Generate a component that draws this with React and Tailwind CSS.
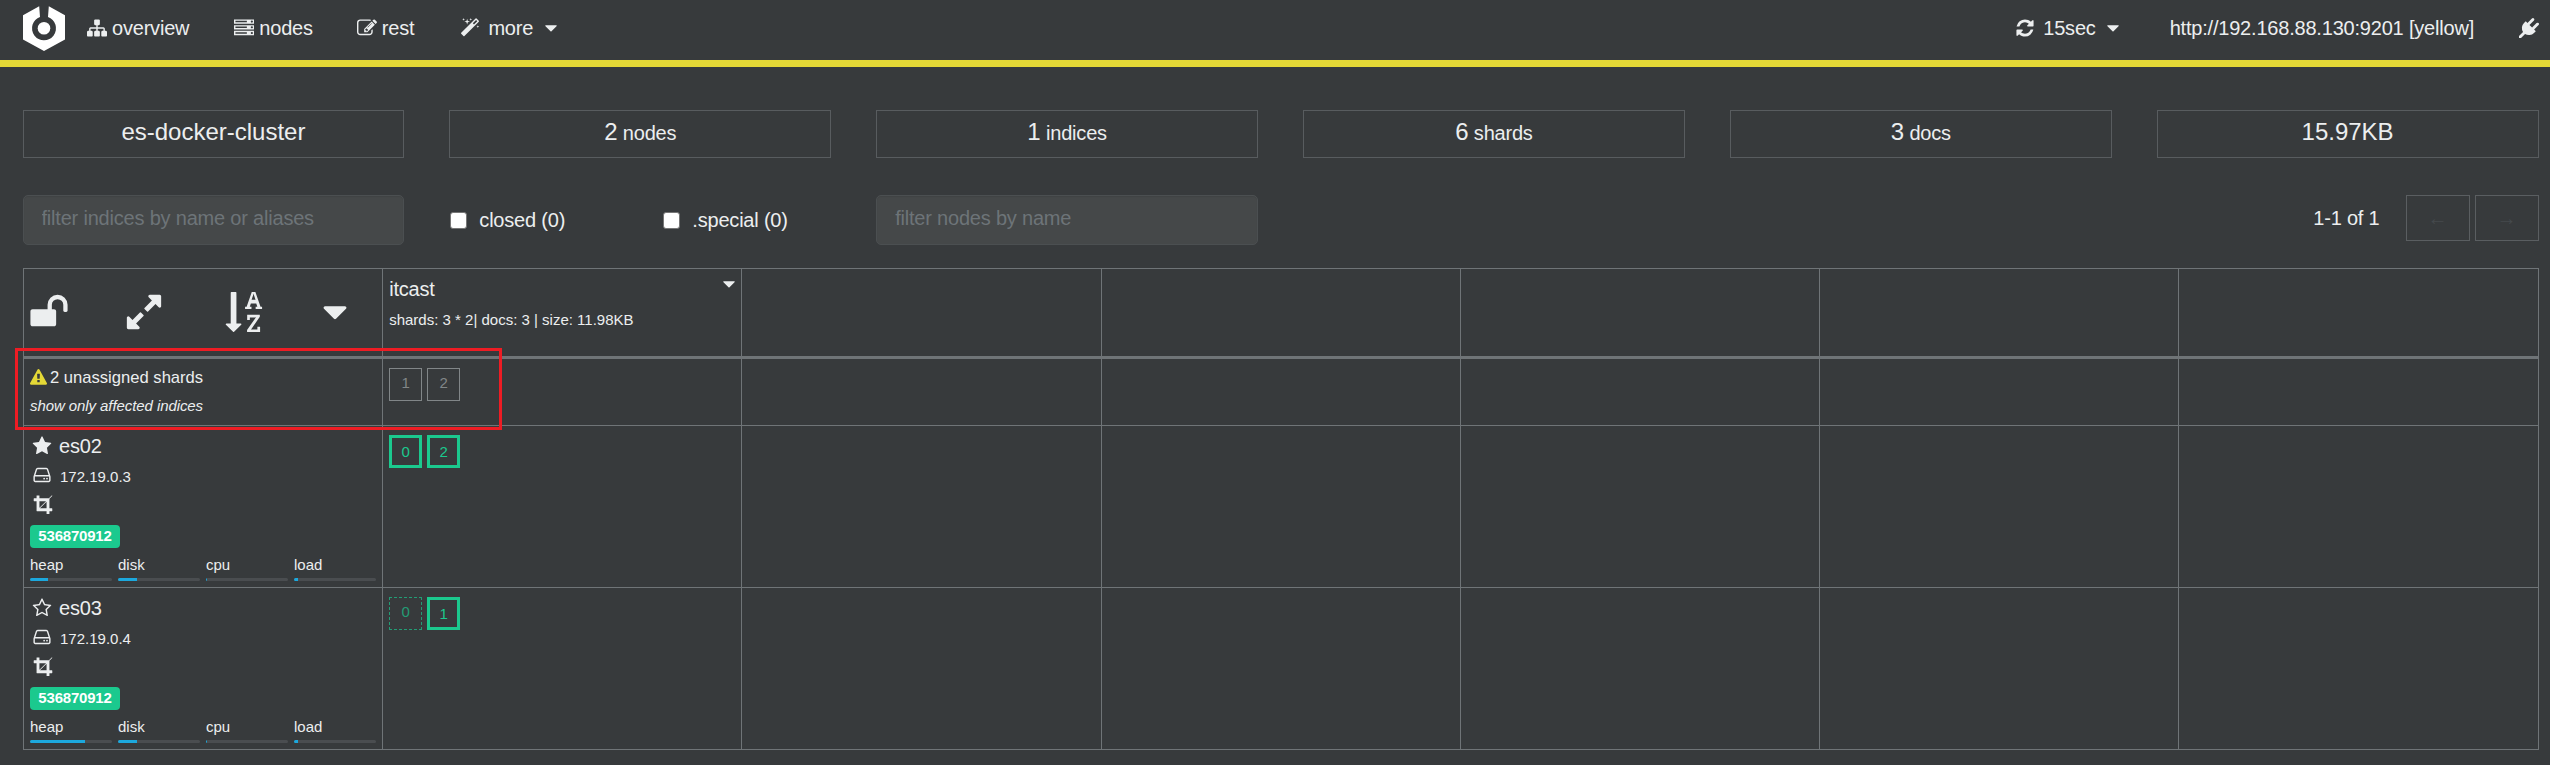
import React from "react";

const ICONS = {
  sitemap:
    "M1792 1248v320q0 40-28 68t-68 28h-320q-40 0-68-28t-28-68v-320q0-40 28-68t68-28h96v-192h-512v192h96q40 0 68 28t28 68v320q0 40-28 68t-68 28h-320q-40 0-68-28t-28-68v-320q0-40 28-68t68-28h96v-192h-512v192h96q40 0 68 28t28 68v320q0 40-28 68t-68 28h-320q-40 0-68-28t-28-68v-320q0-40 28-68t68-28h96v-192q0-52 38-90t90-38h512v-192h-96q-40 0-68-28t-28-68v-320q0-40 28-68t68-28h320q40 0 68 28t28 68v320q0 40-28 68t-68 28h-96v192h512q52 0 90 38t38 90v192h96q40 0 68 28t28 68z",
  server:
    "M128 1408h1024v-128h-1024v128zm0-512h1024v-128h-1024v128zm1568 448q0-40-28-68t-68-28-68 28-28 68 28 68 68 28 68-28 28-68zm-1568-960h1024v-128h-1024v128zm1568 448q0-40-28-68t-68-28-68 28-28 68 28 68 68 28 68-28 28-68zm0-512q0-40-28-68t-68-28-68 28-28 68 28 68 68 28 68-28 28-68zm96 832v384h-1792v-384h1792zm0-512v384h-1792v-384h1792zm0-512v384h-1792v-384h1792z",
  edit:
    "M888 1184l116-116-152-152-116 116v56h96v96h56zm440-720q-16-16-33 1l-350 350q-17 17-1 33t33-1l350-350q17-17 1-33zm80 594v190q0 119-84.5 203.5t-203.5 84.5h-832q-119 0-203.5-84.5t-84.5-203.5v-832q0-119 84.5-203.5t203.5-84.5h832q63 0 117 25 15 7 18 23 3 17-9 29l-49 49q-14 14-32 8-23-6-45-6h-832q-66 0-113 47t-47 113v832q0 66 47 113t113 47h832q66 0 113-47t47-113v-126q0-13 9-22l64-64q15-15 35-7t20 29zm-96-738l288 288-672 672h-288v-288zm444 132l-92 92-288-288 92-92q28-28 68-28t68 28l152 152q28 28 28 68t-28 68z",
  magic:
    "M1254 581l293-293-107-107-293 293zm447-293q0 27-18 45l-1286 1286q-18 18-45 18t-45-18l-198-198q-18-18-18-45t18-45l1286-1286q18-18 45-18t45 18l198 198q18 18 18 45zm-1351-190l98 30-98 30-30 98-30-98-98-30 98-30 30-98zm350 162l196 60-196 60-60 196-60-196-196-60 196-60 60-196zm930 478l98 30-98 30-30 98-30-98-98-30 98-30 30-98zm-640-640l98 30-98 30-30 98-30-98-98-30 98-30 30-98z",
  refresh:
    "M1639 1056q0 5-1 7-64 268-268 434.5t-478 166.5q-146 0-282.5-55t-243.5-157l-129 129q-19 19-45 19t-45-19-19-45v-448q0-26 19-45t45-19h448q26 0 45 19t19 45-19 45l-137 137q71 66 161 102t187 36q134 0 250-65t186-179q11-17 53-117 8-23 30-23h192q13 0 22.5 9.5t9.5 22.5zm25-800v448q0 26-19 45t-45 19h-448q-26 0-45-19t-19-45 19-45l138-138q-148-137-349-137-134 0-250 65t-186 179q-11 17-53 117-8 23-30 23h-199q-13 0-22.5-9.5t-9.5-22.5v-7q65-268 270-434.5t480-166.5q146 0 284 55.5t245 156.5l130-129q19-19 45-19t45 19 19 45z",
  plug:
    "M1755 453q37 38 37 90.5t-37 90.5l-401 400 150 150-160 160q-163 163-389.5 186.5t-411.5-100.5l-362 362h-181v-181l362-362q-124-185-100.5-411.5t186.5-389.5l160-160 150 150 400-401q38-37 91-37t90 37 37 90.5-37 90.5l-400 401 234 234 401-400q38-37 91-37t90 37z",
  unlock:
    "M1728 576v256q0 26-19 45t-45 19h-64q-26 0-45-19t-19-45v-256q0-106-75-181t-181-75-181 75-75 181v192h96q40 0 68 28t28 68v576q0 40-28 68t-68 28h-960q-40 0-68-28t-28-68v-576q0-40 28-68t68-28h672v-192q0-185 131.5-316.5t316.5-131.5 316.5 131.5 131.5 316.5z",
  expand:
    "M883 1056q0 13-10 23l-332 332 144 144q19 19 19 45t-19 45-45 19h-448q-26 0-45-19t-19-45v-448q0-26 19-45t45-19 45 19l144 144 332-332q10-10 23-10t23 10l114 114q10 10 10 23zm781-864v448q0 26-19 45t-45 19-45-19l-144-144-332 332q-10 10-23 10t-23-10l-114-114q-10-10-10-23t10-23l332-332-144-144q-19-19-19-45t19-45 45-19h448q26 0 45 19t19 45z",
  sortAlpha:
    "M1191 352h177l-72-218-12-47q-2-16-2-20h-4l-3 20q0 1-3.5 18t-7.5 29zm-455 1088q0 12-10 24l-319 319q-10 9-23 9-12 0-23-9l-320-320q-15-16-7-35 8-20 30-20h192v-1376q0-14 9-23t23-9h192q14 0 23 9t9 23v1376h192q14 0 23 9t9 23zm836 119v233h-584v-90l369-529q12-18 21-27l11-9v-3q-2 0-6.5.5t-7.5.5q-12 3-30 3h-232v115h-120v-229h567v89l-369 530q-6 8-21 26l-11 11v2l14-2q9-2 30-2h248v-119h121zm89-898v106h-288v-106h75l-47-144h-243l-47 144h75v106h-287v-106h70l230-662h162l230 662h70z",
  caret:
    "M1408 704q0 26-19 45l-448 448q-19 19-45 19t-45-19l-448-448q-19-19-19-45t19-45 45-19h896q26 0 45 19t19 45z",
  warning:
    "M1024 1375v-190q0-14-9.5-23.5t-22.5-9.5h-192q-13 0-22.5 9.5t-9.5 23.5v190q0 14 9.5 23.5t22.5 9.5h192q13 0 22.5-9.5t9.5-23.5zm-2-374l18-459q0-12-10-19-13-11-24-11h-220q-11 0-24 11-10 7-10 21l17 457q0 10 10 16.5t24 6.5h185q14 0 23.5-6.5t10.5-16.5zm-14-934l768 1408q35 63-2 126-17 29-46.5 46t-63.5 17h-1536q-34 0-63.5-17t-46.5-46q-37-63-2-126l768-1408q17-31 47-49t65-18 65 18 47 49z",
  star:
    "M1728 647q0 22-26 48l-363 354 86 500q1 7 1 20 0 21-10.5 35.5t-30.5 14.5q-19 0-40-12l-449-236-449 236q-22 12-40 12-21 0-31.5-14.5t-10.5-35.5q0-6 2-20l86-500-364-354q-25-27-25-48 0-37 56-46l502-73 225-455q19-41 49-41t49 41l225 455 502 73q56 9 56 46z",
  starOutline:
    "M1201 1004l306-297-422-62-189-382-189 382-422 62 306 297-73 421 378-199 377 199zm527-357q0 22-26 48l-363 354 86 500q1 7 1 20 0 50-41 50-19 0-40-12l-449-236-449 236q-22 12-40 12-21 0-31.5-14.5t-10.5-35.5q0-6 2-20l86-500-364-354q-25-27-25-48 0-37 56-46l502-73 225-455q19-41 49-41t49 41l225 455 502 73q56 9 56 46z",
  hdd:
    "M1168 1216q0 33-23.5 56.5t-56.5 23.5-56.5-23.5-23.5-56.5 23.5-56.5 56.5-23.5 56.5 23.5 23.5 56.5zm256 0q0 33-23.5 56.5t-56.5 23.5-56.5-23.5-23.5-56.5 23.5-56.5 56.5-23.5 56.5 23.5 23.5 56.5zm112 160v-320q0-13-9.5-22.5t-22.5-9.5h-1216q-13 0-22.5 9.5t-9.5 22.5v320q0 13 9.5 22.5t22.5 9.5h1216q13 0 22.5-9.5t9.5-22.5zm-1230-480h1180l-157-482q-4-13-16-21.5t-26-8.5h-782q-14 0-26 8.5t-16 21.5zm1358 160v320q0 66-47 113t-113 47h-1216q-66 0-113-47t-47-113v-320q0-25 16-75l197-606q17-53 63-86t101-33h782q55 0 101 33t63 86l197 606q16 50 16 75z",
  crop:
    "M621 1280h595v-595zm-45-45l595-595h-595v595zm1152 77v192q0 14-9 23t-23 9h-224v224q0 14-9 23t-23 9h-192q-14 0-23-9t-9-23v-224h-864q-14 0-23-9t-9-23v-864h-224q-14 0-23-9t-9-23v-192q0-14 9-23t23-9h224v-224q0-14 9-23t23-9h192q14 0 23 9t9 23v224h851l246-247q10-9 23-9t23 9q9 10 9 23t-9 23l-247 246v851h224q14 0 23 9t9 23z",
};

function Icon({ name, className = "size-5" }) {
  return (
    <svg viewBox="0 0 1792 1792" fill="currentColor" className={`shrink-0 ${className}`} aria-hidden="true">
      <path d={ICONS[name]} />
    </svg>
  );
}

function Logo() {
  return (
    <svg viewBox="0 0 42 45" className="h-[45px] w-[42px] shrink-0" aria-hidden="true">
      <path
        fill="#fff"
        d="M16.2 0.2 L17 11 A12 12 0 1 0 25 11 L25.8 0.2 L42 9.2 V33.5 L21 45 L0 33.5 V9.2 Z"
      />
      <circle cx="21" cy="22.3" r="6.3" fill="#fff" />
    </svg>
  );
}

function Navbar() {
  return (
    <nav className="flex h-[67px] items-center border-b-[7px] border-[#e4d836] pb-1 pl-[23px] pr-[11px] text-xl tracking-[-0.2px]">
      <div className="mt-[1px]">
        <Logo />
      </div>
      <a className="ml-[22px] flex items-center gap-[5px]">
        <Icon name="sitemap" />
        overview
      </a>
      <a className="ml-[45px] flex items-center gap-[5px]">
        <Icon name="server" />
        nodes
      </a>
      <a className="ml-[44px] flex items-center gap-[5px]">
        <Icon name="edit" />
        rest
      </a>
      <a className="ml-[46px] flex items-center">
        <Icon name="magic" />
        <span className="ml-[8px]">more</span>
        <Icon name="caret" className="ml-[8px] size-5" />
      </a>
      <a className="ml-auto flex items-center">
        <Icon name="refresh" />
        <span className="ml-[8px]">15sec</span>
        <Icon name="caret" className="ml-[7px] size-5" />
      </a>
      <a className="ml-[47px]">http://192.168.88.130:9201 [yellow]</a>
      <a className="ml-[45px]">
        <Icon name="plug" />
      </a>
    </nav>
  );
}

const STATS = [
  { value: "es-docker-cluster" },
  { value: "2", label: "nodes" },
  { value: "1", label: "indices" },
  { value: "6", label: "shards" },
  { value: "3", label: "docs" },
  { value: "15.97KB" },
];

function Stats() {
  return (
    <div className="mt-[43px] grid grid-cols-6 gap-x-[45px]">
      {STATS.map((s) => (
        <div key={s.value} className="h-12 border border-[#585c5f] text-center text-2xl leading-[42px]">
          {s.value}
          {s.label && <span className="text-xl leading-none tracking-[-0.2px]"> {s.label}</span>}
        </div>
      ))}
    </div>
  );
}

function FilterInput({ placeholder }) {
  return (
    <input
      placeholder={placeholder}
      className="h-[50px] w-full rounded-[5px] border border-[#4b4f51] bg-[#454849] px-[18px] pb-[3px] text-xl tracking-[-0.2px] shadow-[inset_0_1px_1px_rgba(0,0,0,0.075)] outline-none placeholder:text-[#6d7478]"
    />
  );
}

function Check({ label }) {
  return (
    <label className="flex w-[213px] shrink-0 items-center">
      <span className="ml-[1px] size-[17px] rounded-[3px] border border-[#767676] bg-white" />
      <span className="ml-[12px] leading-[26px]">{label}</span>
    </label>
  );
}

function PageButton({ children }) {
  return (
    <button className="h-[46px] w-16 border border-[#5a5e61] text-xl text-[#45494c]">{children}</button>
  );
}

function Filters() {
  return (
    <div className="mt-[37px] grid h-[50px] grid-cols-6 gap-x-[45px] text-xl tracking-[-0.2px]">
      <FilterInput placeholder="filter indices by name or aliases" />
      <div className="flex items-center whitespace-nowrap">
        <Check label="closed (0)" />
        <Check label=".special (0)" />
      </div>
      <FilterInput placeholder="filter nodes by name" />
      <div className="col-span-3 flex h-[46px] items-center justify-end">
        <span className="mr-[26px]">1-1 of 1</span>
        <div className="flex gap-[5px]">
          <PageButton>←</PageButton>
          <PageButton>→</PageButton>
        </div>
      </div>
    </div>
  );
}

const SHARD_STYLES = {
  unassigned: "border border-[#818688] text-[#818688] leading-[27px]",
  primary: "border-[3px] border-[#1bc98e] text-[#1bc98e] leading-[28px]",
  replica: "border border-dashed border-[#239c75] text-[#239c75] leading-[28px]",
};

function Shards({ items, className = "" }) {
  return (
    <div className={`flex gap-[5px] ${className}`}>
      {items.map(([n, kind]) => (
        <div key={n} className={`size-[33px] text-center text-[15px] ${SHARD_STYLES[kind]}`}>
          {n}
        </div>
      ))}
    </div>
  );
}

function Row({ className, children }) {
  const cells = React.Children.toArray(children);
  return (
    <div className={`grid grid-cols-[repeat(6,359.2px)_1fr] border-[#6f7477] ${className}`}>
      {Array.from({ length: 7 }, (_, i) => (
        <div key={i} className="overflow-hidden border-l border-[#6f7477] px-[6px]">
          {cells[i]}
        </div>
      ))}
    </div>
  );
}

function Meter({ label, px }) {
  return (
    <div className="w-[82px]">
      <div className="text-[15px] leading-5">{label}</div>
      <div className="mt-[3px] h-[3px] overflow-hidden rounded-sm bg-[#4a4d50]">
        <div className="h-full bg-[#1ca8dd]" style={{ width: px }} />
      </div>
    </div>
  );
}

function NodeInfo({ name, ip, master, heap }) {
  return (
    <div className="pt-[7px]">
      <div className="flex h-[26px] items-center text-xl leading-[26px] tracking-[-0.2px]">
        <Icon name={master ? "star" : "starOutline"} className="ml-[2px] size-5" />
        <span className="ml-[7px]">{name}</span>
      </div>
      <div className="mt-[5px] flex h-[25px] items-center text-[15px]">
        <Icon name="hdd" className="-mt-[3px] ml-[2px] size-5" />
        <span className="ml-[8px] mt-[1px]">{ip}</span>
      </div>
      <div className="mt-[2px] flex h-[25px] items-center">
        <Icon name="crop" className="ml-[3px] size-5" />
      </div>
      <div className="mt-[9px] h-[23px] w-[90px] rounded-[4px] bg-[#1bc98e] text-center text-[15px] font-bold leading-[21px] tracking-[-0.2px] text-white">
        536870912
      </div>
      <div className="mt-[7px] flex gap-[6px]">
        <Meter label="heap" px={heap} />
        <Meter label="disk" px={19} />
        <Meter label="cpu" px={1} />
        <Meter label="load" px={4} />
      </div>
    </div>
  );
}

function ShardTable() {
  return (
    <div className="relative ml-[0.5px] mt-[23px] w-[2516px] border-y border-r border-[#6f7477]">
      <Row className="h-[90px] border-b-[3px]">
        <div className="-ml-[1.5px] flex pt-[23px]">
          <Icon name="unlock" className="size-10" />
          <Icon name="expand" className="ml-[55px] size-10" />
          <Icon name="sortAlpha" className="ml-[61px] size-10" />
          <Icon name="caret" className="ml-[50px] size-10" />
        </div>
        <div className="pt-[7px]">
          <div className="flex justify-between text-xl leading-[26px] tracking-[-0.2px]">
            itcast
            <Icon name="caret" className="-mr-[4px] -mt-[2px] size-5" />
          </div>
          <div className="mt-[8px] text-[15px] leading-5">shards: 3 * 2| docs: 3 | size: 11.98KB</div>
        </div>
      </Row>
      <Row className="h-[67px] border-b">
        <div className="pt-[7px]">
          <div className="flex items-center text-[16.6px] leading-[23px]">
            <Icon name="warning" className="mr-[3px] size-[17px] text-[#e4d836]" />2 unassigned shards
          </div>
          <div className="mt-[7px] text-[15px] italic leading-5 tracking-[-0.08px]">show only affected indices</div>
        </div>
        <Shards className="pt-[9px]" items={[[1, "unassigned"], [2, "unassigned"]]} />
      </Row>
      <Row className="h-[162px] border-b">
        <NodeInfo name="es02" ip="172.19.0.3" master heap={18} />
        <Shards className="pt-[9px]" items={[[0, "primary"], [2, "primary"]]} />
      </Row>
      <Row className="h-[161px]">
        <NodeInfo name="es03" ip="172.19.0.4" heap={55} />
        <Shards className="pt-[9px]" items={[[0, "replica"], [1, "primary"]]} />
      </Row>
      {/* highlight box over the unassigned shards row */}
      <div className="absolute -left-2 top-[79px] h-[82px] w-[487px] border-[3px] border-[#ee1c24]" />
    </div>
  );
}

export default function App() {
  return (
    <div className="h-[765px] w-[2550px] overflow-hidden bg-[#373a3c] font-['Liberation_Sans',Arial,sans-serif] text-[#eceeef]">
      <Navbar />
      <main className="pl-[22.5px] pr-[11.5px]">
        <Stats />
        <Filters />
        <ShardTable />
      </main>
    </div>
  );
}
